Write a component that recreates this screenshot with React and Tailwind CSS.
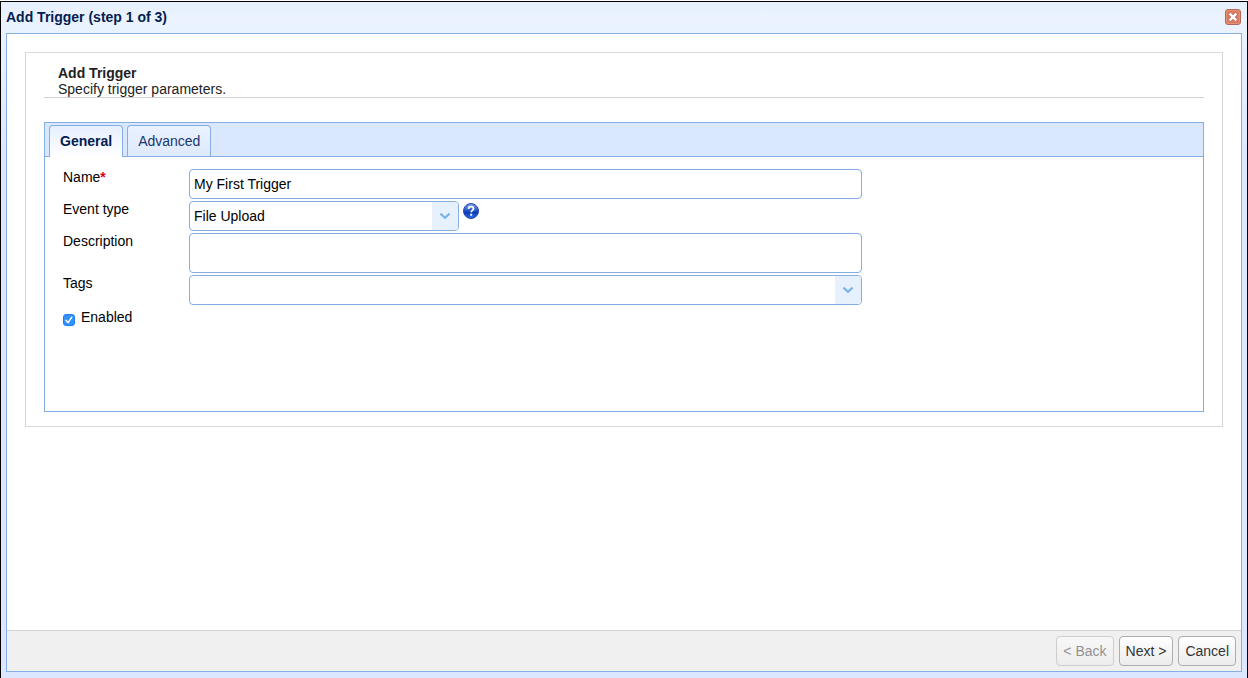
import React, { useState } from 'react';

const TABS = ['General', 'Advanced'];
const EVENT_TYPES = ['File Upload', 'File Download', 'File Delete'];
const TAG_OPTIONS = ['', 'Finance', 'Reports'];

export default function App() {
  const [tab, setTab] = useState('General');

  return (
    <div className="flex min-h-screen flex-col bg-white pt-px font-['Liberation_Sans',Arial,sans-serif] text-sm leading-4 text-black">
      <div className="flex flex-1 flex-col border-x border-t border-black bg-[#dae7ff] bg-linear-to-b from-[#e6effe] from-0% via-[#ebf3ff] via-[16px] to-[#dae7ff] to-[160px] px-[5px] pb-1.5">
        <header className="flex h-[31px] items-center justify-between pr-px pb-0.5">
          <h1 className="font-bold text-[#04204f]">Add Trigger (step 1 of 3)</h1>
          <button type="button" aria-label="Close">
            <CloseIcon />
          </button>
        </header>

        <main className="flex flex-1 flex-col border border-[#86aee3] bg-white">
          <div className="flex-1 p-[18px]">
            <section className="border border-[#d8d8d8] px-[18px] pt-3 pb-3.5">
              <div className="border-b border-[#d2d2d2] px-3.5 text-[#222]">
                <h2 className="font-bold">Add Trigger</h2>
                <p>Specify trigger parameters.</p>
              </div>
              <div className="mt-6 border border-[#86aee3]">
                <TabBar active={tab} onChange={setTab} />
                <div className="h-[254px] px-[18px] py-3">
                  {tab === 'General' && <GeneralForm />}
                </div>
              </div>
            </section>
          </div>

          <footer className="flex justify-end gap-[5px] border-t border-[#d2d2d2] bg-[#f0f0f0] p-[5px]">
            <FooterButton disabled>&lt; Back</FooterButton>
            <FooterButton>Next &gt;</FooterButton>
            <FooterButton>Cancel</FooterButton>
          </footer>
        </main>
      </div>
    </div>
  );
}

function TabBar({ active, onChange }) {
  return (
    <div role="tablist" className="flex h-[34px] gap-1 border-b border-[#86aee3] bg-[#dae8ff] px-1 pt-0.5">
      {TABS.map((name) => (
        <button
          key={name}
          type="button"
          role="tab"
          aria-selected={active === name}
          onClick={() => onChange(name)}
          className={
            active === name
              ? '-mb-px rounded-t border border-b-0 border-[#86aee3] bg-linear-to-b from-[#e6efff] to-white px-2.5 pb-0.5 font-bold text-[#04204f]'
              : 'rounded-t border border-b-0 border-[#86aee3] bg-linear-to-b from-[#eaf2ff] to-[#dee9fc] px-2.5 text-[#1b376c]'
          }
        >
          {name}
        </button>
      ))}
    </div>
  );
}

function GeneralForm() {
  const [name, setName] = useState('My First Trigger');
  const [enabled, setEnabled] = useState(true);

  return (
    <form className="flex max-w-[799px] flex-col gap-0.5">
      <Field id="name" label="Name" required>
        <input
          id="name"
          type="text"
          value={name}
          onChange={(e) => setName(e.target.value)}
          className="h-[30px] w-full rounded border border-[#86aee3] bg-white px-1"
        />
      </Field>
      <Field id="event-type" label="Event type">
        <div className="flex items-start gap-1">
          <div className="w-[270px]">
            <Select id="event-type" options={EVENT_TYPES} />
          </div>
          <button type="button" aria-label="Help" className="mt-0.5">
            <HelpIcon />
          </button>
        </div>
      </Field>
      <Field id="description" label="Description">
        <textarea id="description" className="block h-10 w-full resize-none rounded border border-[#86aee3] bg-white p-1" />
      </Field>
      <Field id="tags" label="Tags">
        <Select id="tags" options={TAG_OPTIONS} />
      </Field>
      <div className="mt-0.5 flex items-start gap-1.5">
        <span className="relative mt-[5px] flex h-3 w-3">
          <input
            id="enabled"
            type="checkbox"
            checked={enabled}
            onChange={(e) => setEnabled(e.target.checked)}
            className="peer h-3 w-3 appearance-none rounded-[3px] border border-[#b5b5b5] bg-white checked:border-[#1f80f5] checked:bg-[#3391fc]"
          />
          <svg viewBox="0 0 12 12" className="pointer-events-none absolute inset-0 hidden h-3 w-3 peer-checked:block">
            <path d="M3 6.4 5.1 8.6 8.8 3.2" fill="none" stroke="#fff" strokeWidth="1.5" strokeLinecap="round" strokeLinejoin="round" />
          </svg>
        </span>
        <label htmlFor="enabled">Enabled</label>
      </div>
    </form>
  );
}

function Field({ id, label, required, children }) {
  return (
    <div className="flex items-start">
      <label htmlFor={id} className="w-[126px] shrink-0">
        {label}
        {required && <span className="font-bold text-[#d9001b]">*</span>}
      </label>
      <div className="min-w-0 flex-1">{children}</div>
    </div>
  );
}

function Select({ id, options }) {
  return (
    <div className="relative">
      <select id={id} className="block h-[30px] w-full appearance-none rounded border border-[#86aee3] bg-white pr-8 pl-1">
        {options.map((opt) => (
          <option key={opt} value={opt}>{opt}</option>
        ))}
      </select>
      <span className="pointer-events-none absolute inset-y-px right-px flex w-[26px] items-center justify-center rounded-r-[3px] bg-[#e7f1fd]">
        <svg viewBox="0 0 12 8" className="h-2 w-3">
          <path d="M1.4 1.6 6 5.8 10.6 1.6" fill="none" stroke="#78b5e8" strokeWidth="2.2" />
        </svg>
      </span>
    </div>
  );
}

function FooterButton({ disabled, children }) {
  return (
    <button
      type="button"
      disabled={disabled}
      className="h-[30px] rounded border border-[#adadad] bg-linear-to-b from-white to-[#ececec] px-1.5 text-[#333] disabled:opacity-50"
    >
      {children}
    </button>
  );
}

function CloseIcon() {
  return (
    <svg viewBox="0 0 16 16" className="block h-4 w-4">
      <rect x=".5" y=".5" width="15" height="15" rx="2.5" fill="#dc7b62" stroke="#b0675c" />
      <rect x="1.5" y="1.5" width="13" height="13" rx="1.5" fill="none" stroke="#e59272" />
      <path d="m4.7 4.7 6.6 6.6m0-6.6-6.6 6.6" stroke="#b9685a" strokeWidth="3.6" />
      <path d="m4.7 4.7 6.6 6.6m0-6.6-6.6 6.6" stroke="#fff" strokeWidth="2.4" />
    </svg>
  );
}

function HelpIcon() {
  return (
    <svg viewBox="0 0 16 16" className="block h-4 w-4">
      <defs>
        <linearGradient id="help-fill" x1="0" y1="0" x2="0" y2="1">
          <stop offset="0" stopColor="#86a5e4" />
          <stop offset=".45" stopColor="#2a58c6" />
          <stop offset=".6" stopColor="#0d3bb8" />
          <stop offset="1" stopColor="#2e6eea" />
        </linearGradient>
      </defs>
      <circle cx="8" cy="8" r="7.5" fill="url(#help-fill)" stroke="#1e48b4" />
      <path d="M5.6 6C5.6 4.4 6.6 3.7 8 3.7S10.5 4.5 10.5 5.8C10.5 7.5 8.2 7.3 8.2 9.3" fill="none" stroke="#fff" strokeWidth="1.8" />
      <rect x="7.2" y="10.7" width="2" height="2" fill="#fff" />
    </svg>
  );
}
